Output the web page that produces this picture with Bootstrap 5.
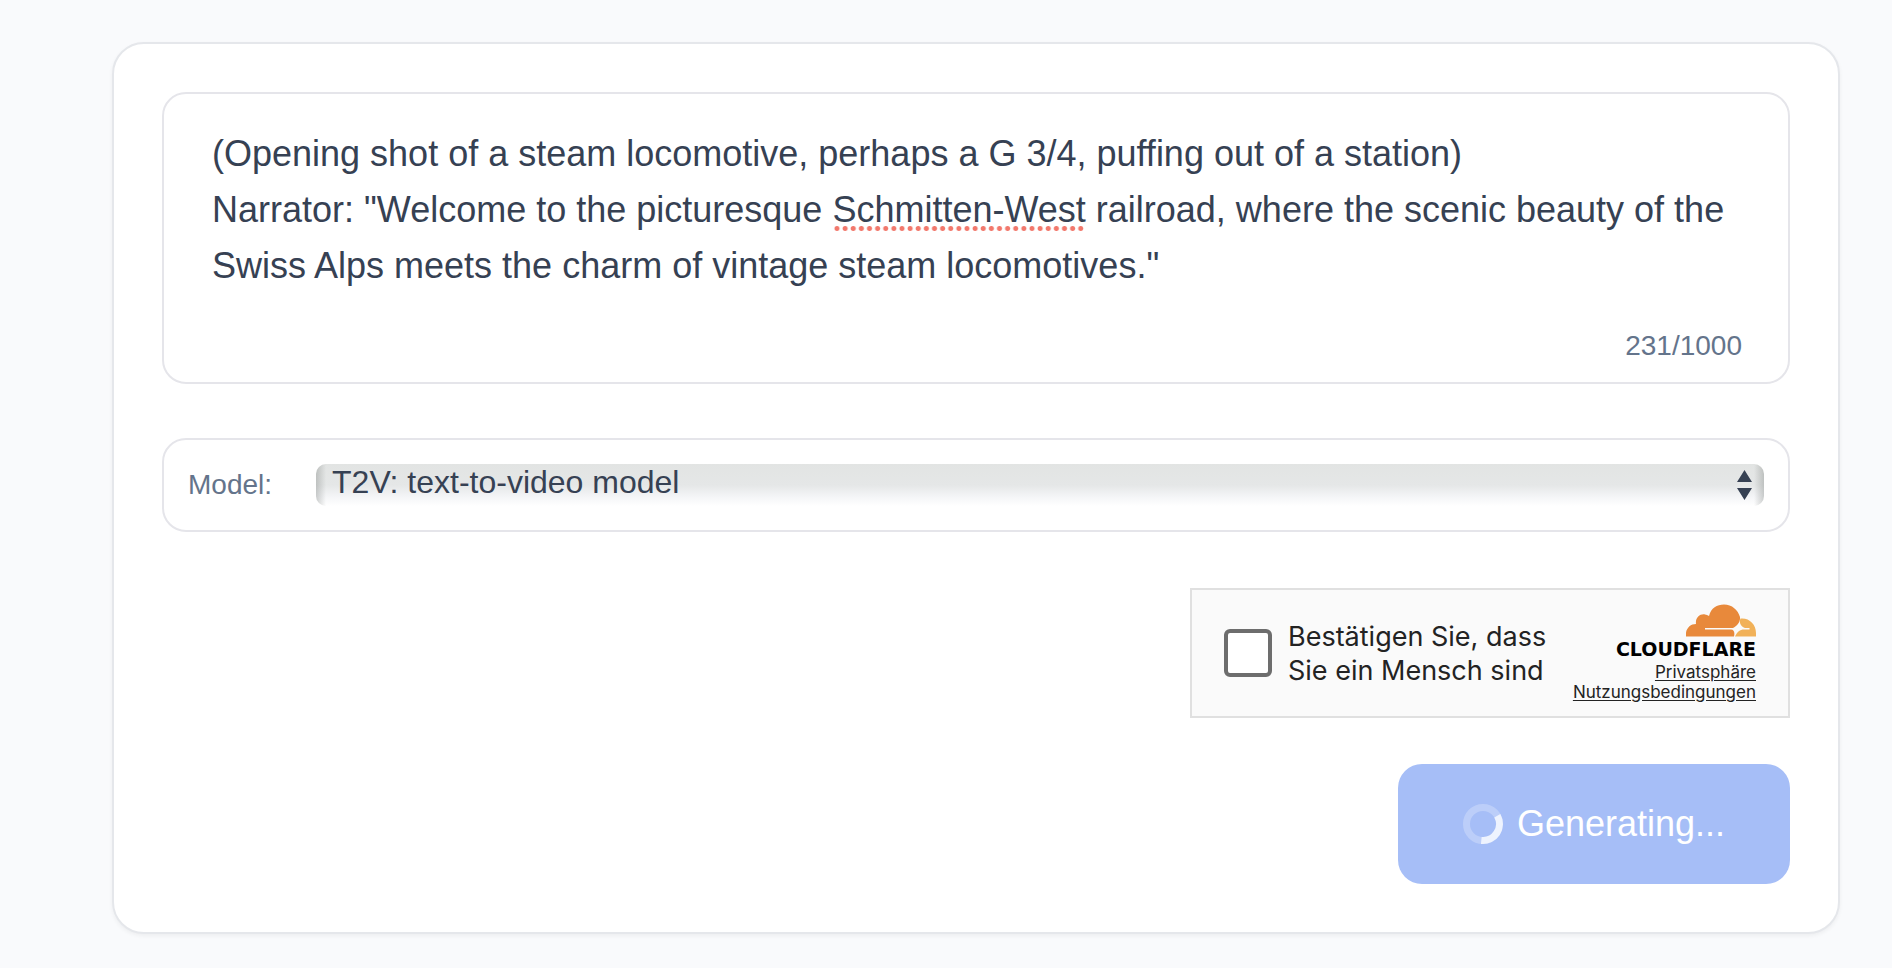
<!DOCTYPE html>
<html lang="en">
<head>
<meta charset="utf-8">
<meta name="viewport" content="width=device-width, initial-scale=1">
<title>Text to video</title>
<link href="https://cdn.jsdelivr.net/npm/bootstrap@5.3.0/dist/css/bootstrap.min.css" rel="stylesheet">
<style>
  body { background: #f9fafc; color: #364153; font-family: "Liberation Sans", Arial, sans-serif; }
  .page { padding: 42px 52px 34px 112px; }
  .panel { background: #fff; border: 2px solid #e5e7eb; border-radius: 32px; padding: 48px; box-shadow: 0 2px 4px rgba(0, 0, 0, .05); }
  .field { border: 2px solid #e5e5ea; border-radius: 24px; }
  .prompt { height: 292px; margin-bottom: 54px; }
  .prompt textarea { height: 200px; padding: 32px 48px 0; border: 0; background: transparent; color: inherit; font-size: 36px; line-height: 56px; resize: none; outline: 0; overflow: hidden; }
  .spelling { left: 669px; top: 132px; width: 252px; height: 5px; background: radial-gradient(circle, #f2786c 2px, transparent 3px) 0 0 / 8px 5px space; pointer-events: none; }
  .muted-text { color: #64748b; font-size: 28px; line-height: 40px; }
  .counter { padding: 32px 46px 0; }
  .model { padding: 24px; margin-bottom: 56px; gap: 44px; }
  .model select {
    height: 42px; padding: 0 40px 6px 16px; border: 0; border-radius: 10px; color: inherit; font-size: 32px; line-height: 36px; appearance: none; outline: 0;
    background:
      url("data:image/svg+xml,%3Csvg xmlns='http://www.w3.org/2000/svg' viewBox='0 0 15 30'%3E%3Cpath fill='%23364153' d='M7.500 0L15 12H0zM0 18h15L7.500 30z'/%3E%3C/svg%3E") right 12px top 6px / 15px 30px no-repeat,
      linear-gradient(to right, rgba(110, 115, 112, .32), transparent 10px),
      linear-gradient(to left, rgba(110, 115, 112, .32), transparent 10px),
      linear-gradient(#e2e4e3, #e5e7e7 50%, #f4f5f7 78%, #fff);
  }
  .captcha { width: 600px; height: 130px; max-width: 100%; padding: 0 32px; border: 2px solid #e0e0e0; background: #fafafa; color: #232323; font-family: Inter, "Liberation Sans", sans-serif; margin-bottom: 46px; }
  .captcha input { width: 48px; height: 48px; margin: 0 16px 0 0; border: 4px solid #6d6d6d; border-radius: 6px; background: #fff; appearance: none; }
  .captcha label { padding-top: 2px; font-size: 27px; line-height: 34px; }
  .captcha a { color: #232323; font-size: 17px; line-height: 20px; text-underline-offset: 2px; }
  .wordmark { margin: 2px 0 3px; color: #000; font-family: "DejaVu Sans", sans-serif; font-size: 19px; line-height: 20px; font-weight: 700; }
  .cloud { width: 70px; height: 33px; }
  .generate { height: 120px; padding: 0 65px; gap: 14px; border: 0; border-radius: 24px; background: #a6bef7; color: #fff; font-size: 36px; line-height: 56px; }
</style>
</head>
<body>
<main class="page">
  <form class="panel">
    <div class="field prompt position-relative">
      <textarea class="d-block w-100" aria-label="Prompt" maxlength="1000" spellcheck="false">(Opening shot of a steam locomotive, perhaps a G 3/4, puffing out of a station)
Narrator: "Welcome to the picturesque Schmitten-West railroad, where the scenic beauty of the Swiss Alps meets the charm of vintage steam locomotives."</textarea>
      <span class="spelling position-absolute"></span>
      <div class="counter muted-text text-end">231/1000</div>
    </div>

    <div class="field model d-flex align-items-center">
      <label class="muted-text" for="model">Model:</label>
      <select id="model" class="flex-grow-1">
        <option>T2V: text-to-video model</option>
      </select>
    </div>

    <div class="d-flex flex-column align-items-end">
      <div class="captcha d-flex align-items-center justify-content-between">
        <div class="d-flex align-items-center">
          <input type="checkbox" id="human">
          <label for="human">Bestätigen Sie, dass<br>Sie ein Mensch sind</label>
        </div>
        <div class="d-flex flex-column align-items-end">
          <svg class="cloud" viewBox="0 0 70 33" aria-hidden="true">
            <path fill="#e8893b" d="M0 32.500C-1 25 4 20 10 20C9 14 14 9.500 19 10.500Q21 10.500 23 12C25 4 31 .5 38 .5C46 .5 52 6 54 13C54.500 18 51 22 47 24H19v1.500h26c3 0 4 3 3 7z"/>
            <path fill="#f1b158" d="M54.500 14.500C63 13.500 70 20 70 29v3.500H49C51 28 54 25.500 58 25.500h5.500V24H59C54 22 53 18 54.500 14.500z"/>
          </svg>
          <span class="wordmark">CLOUDFLARE</span>
          <a href="#">Privatsphäre</a>
          <a href="#">Nutzungsbedingungen</a>
        </div>
      </div>

      <button type="button" class="generate d-flex align-items-center justify-content-center">
        <svg width="40" height="40" viewBox="0 0 40 40" fill="none" stroke="#fff" stroke-width="7" aria-hidden="true">
          <circle cx="20" cy="20" r="16.500" stroke-opacity=".25"/>
          <path d="M34.300 11.800A16.500 16.500 0 0 1 18.300 36.400" stroke-opacity=".75"/>
        </svg>
        Generating...
      </button>
    </div>
  </form>
</main>
<script src="https://cdn.jsdelivr.net/npm/bootstrap@5.3.0/dist/js/bootstrap.bundle.min.js"></script>
</body>
</html>
